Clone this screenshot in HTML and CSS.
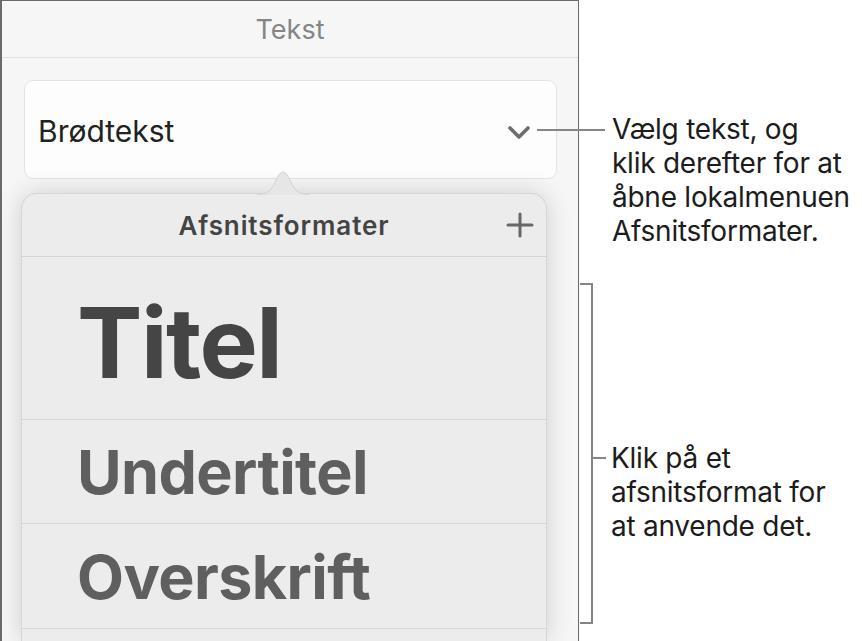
FILE: index.html
```html
<!DOCTYPE html>
<html lang="da">
<head>
<meta charset="utf-8">
<title>Afsnitsformater</title>
<link rel="stylesheet" href="styles.css">
</head>
<body>
<div class="figure">
  <section class="panel">
    <header class="panel-head">Tekst</header>
    <div class="select">
      <span class="select-label">Brødtekst</span>
      <svg class="chevron" width="24" height="16" viewBox="0 0 24 16" aria-hidden="true">
        <path d="M3 3 L12 12 L21 3" fill="none" stroke="#6e6e6e" stroke-width="3.6" stroke-linecap="round" stroke-linejoin="round"/>
      </svg>
    </div>
    <div class="popover">
      <svg class="popover-arrow" width="52" height="26" viewBox="0 0 52 26" aria-hidden="true">
        <path d="M0 26 C11 26 15 21 20 9 Q26 -3 32 9 C37 21 41 26 52 26 Z" fill="#e6e6e6"/>
        <path d="M0 25.5 C11 25.5 15 21 20 9 Q26 -3 32 9 C37 21 41 25.5 52 25.5" fill="none" stroke="#d2d2d2" stroke-width="1"/>
      </svg>
      <div class="popover-head">
        <span class="popover-title">Afsnitsformater</span>
        <svg class="plus" width="28" height="26" viewBox="0 0 28 26" aria-hidden="true">
          <path d="M14 2 V24 M2 13 H26" stroke="#676767" stroke-width="3" stroke-linecap="round"/>
        </svg>
      </div>
      <div class="style-row row-title"><span class="style-name name-title">Titel</span></div>
      <div class="style-row row-sub"><span class="style-name name-sub">Undertitel</span></div>
      <div class="style-row row-head"><span class="style-name name-sub">Overskrift</span></div>
      <div class="style-row row-more"></div>
    </div>
  </section>
  <aside class="notes">
    <div class="callout">
      <span class="leader"></span>
      <p class="note-text">Vælg tekst, og<br>klik derefter for at<br>åbne lokalmenuen<br>Afsnitsformater.</p>
    </div>
    <div class="bracket-note">
      <div class="bracket"></div>
      <div class="bracket-label">
        <span class="tick"></span>
        <p class="note-text">Klik på et<br>afsnitsformat for<br>at anvende det.</p>
      </div>
    </div>
  </aside>
</div>
</body>
</html>
```

FILE: styles.css
```css
* { box-sizing: border-box; }

html, body {
  margin: 0;
  padding: 0;
  background: #ffffff;
}

body {
  width: 862px;
  height: 641px;
  overflow: hidden;
  font-family: Inter, "Liberation Sans", Arial, sans-serif;
}

.figure {
  display: flex;
  height: 641px;
}

/* ---------- panel ---------- */
.panel {
  width: 579px;
  height: 641px;
  flex: none;
  background: #f6f6f6;
  border-top: 1px solid #6a6a6a;
  border-left: 2px solid #6a6a6a;
  border-right: 1px solid #6a6a6a;
  overflow: hidden;
  display: flex;
  flex-direction: column;
}

.panel-head {
  height: 57px;
  flex: none;
  border-bottom: 1px solid #e1e1e1;
  display: flex;
  align-items: center;
  justify-content: center;
  font-size: 27px;
  color: #858585;
  padding-top: 1px;
}

.select {
  margin: 22px 21px 0 22px;
  height: 99px;
  flex: none;
  background: #fdfdfd;
  border: 1px solid #e4e4e4;
  border-radius: 9px;
  display: flex;
  align-items: center;
  justify-content: space-between;
  padding: 2px 25px 0 13px;
}

.select-label {
  font-size: 30px;
  color: #222222;
}

.chevron {
  display: block;
  margin-top: 4px;
}

/* ---------- popover ---------- */
.popover {
  position: relative;
  margin: 14px 31px 0 19px;
  flex: 1;
  background: #ececec;
  border: 1px solid #d6d6d6;
  border-bottom: none;
  border-radius: 16px 16px 0 0;
  box-shadow: 0 0 26px rgba(0, 0, 0, 0.16);
  display: flex;
  flex-direction: column;
}

.popover-arrow {
  position: absolute;
  left: 235px;
  top: -25px;
  display: block;
}

.popover-head {
  height: 63px;
  flex: none;
  border-bottom: 1px solid #d5d5d5;
  display: grid;
  grid-template-columns: 1fr auto 1fr;
  align-items: center;
  padding: 0 12px;
}

.popover-title {
  grid-column: 2;
  font-size: 26px;
  font-weight: 600;
  color: #444444;
  letter-spacing: 0.9px;
}

.plus {
  grid-column: 3;
  justify-self: end;
  display: block;
}

.style-row {
  flex: none;
  border-bottom: 1px solid #d6d6d6;
  display: flex;
  align-items: center;
  padding-left: 55px;
}

.row-title { height: 163px; padding-top: 9px; }
.row-sub { height: 104px; padding-top: 2px; }
.row-head { height: 105px; padding-top: 3px; }
.row-more { flex: 1; border-bottom: none; }

.style-name {
  line-height: 1;
  font-weight: 700;
}

.name-title {
  font-size: 98px;
  color: #454545;
  letter-spacing: -1.5px;
}

.name-sub {
  font-size: 61px;
  color: #5f5f5f;
  letter-spacing: -0.6px;
}

/* ---------- notes ---------- */
.notes {
  flex: 1;
  padding-top: 112px;
  display: flex;
  flex-direction: column;
}

.note-text {
  margin: 0;
  font-size: 28px;
  line-height: 34px;
  color: #1c1c1c;
  letter-spacing: -0.25px;
}

.callout {
  display: flex;
  align-items: flex-start;
}

.leader {
  flex: none;
  width: 68px;
  height: 2px;
  margin: 17px 7px 0 -42px;
  background: #858585;
}

.bracket-note {
  margin-top: 35px;
  display: flex;
  align-items: flex-start;
}

.bracket {
  flex: none;
  width: 13px;
  height: 341px;
  margin-left: 1px;
  border: 2px solid #858585;
  border-left: none;
}

.bracket-label {
  display: flex;
  align-items: flex-start;
  padding-top: 158px;
}

.tick {
  flex: none;
  width: 13px;
  height: 2px;
  margin: 16px 5px 0 0;
  background: #858585;
}
```
